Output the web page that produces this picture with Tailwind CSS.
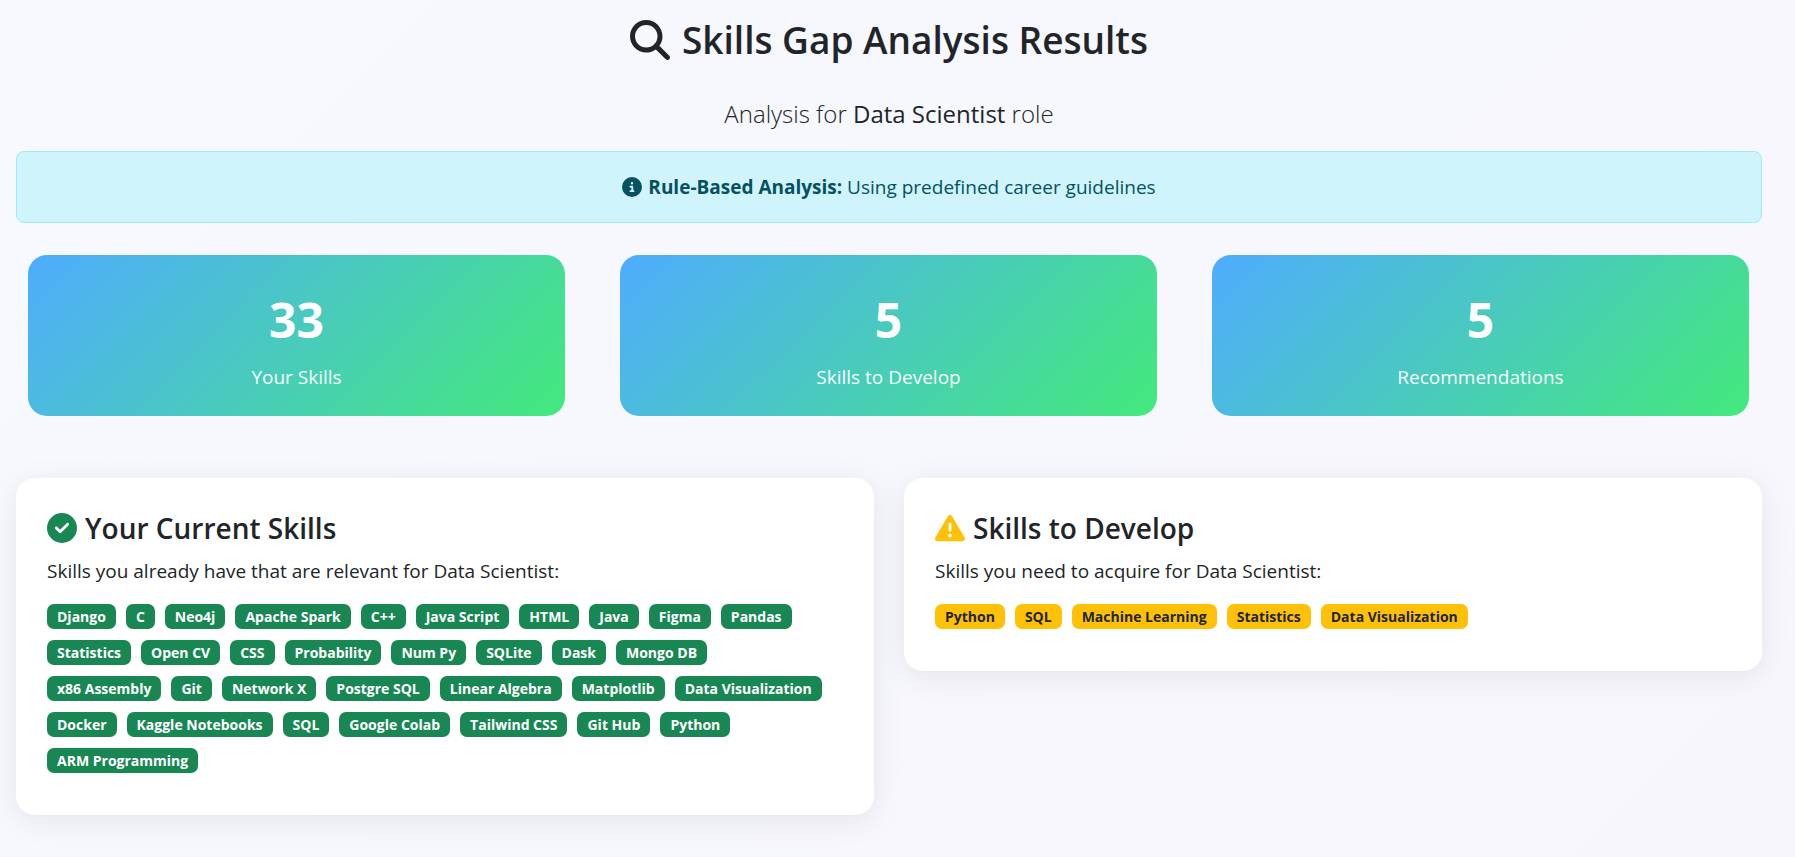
<!DOCTYPE html>
<html lang="en">
<head>
<meta charset="utf-8">
<meta name="viewport" content="width=device-width, initial-scale=1">
<title>Skills Gap Analysis Results</title>
<script src="https://cdn.jsdelivr.net/npm/@tailwindcss/browser@4"></script>
</head>
<body class="min-h-screen bg-linear-135/srgb from-[#f6f9fe] to-[#f7f6fc] font-['Open_Sans','Noto_Sans',sans-serif] text-[19px] leading-[30px] text-[#212529]">
<main class="pl-4 pr-[33px] pt-4 pb-10">
  <header class="text-center">
    <h1 class="flex items-center justify-center gap-3 text-[37px] leading-12 font-semibold">
      <svg class="size-10 shrink-0" viewBox="0 0 512 512" fill="currentColor" aria-hidden="true"><path d="M416 208c0 45.900-14.900 88.300-40 122.700L502.600 457.400c12.500 12.500 12.500 32.800 0 45.300s-32.800 12.500-45.300 0L330.700 376c-34.400 25.200-76.800 40-122.700 40C93.100 416 0 322.900 0 208S93.100 0 208 0S416 93.100 416 208zM208 352a144 144 0 1 0 0-288 144 144 0 1 0 0 288z"/></svg>
      Skills Gap Analysis Results
    </h1>
    <p class="mt-8 text-[24px] leading-9 font-light">Analysis for <strong class="font-normal">Data Scientist</strong> role</p>
  </header>

  <div role="status" class="mt-[19px] flex items-center justify-center gap-[6px] rounded-lg border border-[#9eeaf9] bg-[#cff4fc] px-5 py-5 text-[#055160]">
    <svg class="size-5 shrink-0" viewBox="0 0 512 512" fill="currentColor" aria-hidden="true"><path d="M256 512A256 256 0 1 0 256 0a256 256 0 1 0 0 512zM216 336h24V272H216c-13.300 0-24-10.700-24-24s10.700-24 24-24h48c13.300 0 24 10.700 24 24v88h8c13.300 0 24 10.700 24 24s-10.700 24-24 24H216c-13.300 0-24-10.700-24-24s10.700-24 24-24zm40-208a32 32 0 1 1 0 64 32 32 0 1 1 0-64z"/></svg>
    <p><strong class="font-bold">Rule-Based Analysis:</strong> Using predefined career guidelines</p>
  </div>

  <section class="mt-8 grid grid-cols-3 gap-[55px] pl-3 pr-[13px] text-center text-white">
    <div class="rounded-[19px] bg-linear-135/srgb from-[#4facfe] to-[#43e97b] px-6 pt-[35px] pb-6">
      <div class="text-[48px] leading-[60px] font-bold">33</div>
      <div class="mt-3 leading-[30px] opacity-95">Your Skills</div>
    </div>
    <div class="rounded-[19px] bg-linear-135/srgb from-[#4facfe] to-[#43e97b] px-6 pt-[35px] pb-6">
      <div class="text-[48px] leading-[60px] font-bold">5</div>
      <div class="mt-3 leading-[30px] opacity-95">Skills to Develop</div>
    </div>
    <div class="rounded-[19px] bg-linear-135/srgb from-[#4facfe] to-[#43e97b] px-6 pt-[35px] pb-6">
      <div class="text-[48px] leading-[60px] font-bold">5</div>
      <div class="mt-3 leading-[30px] opacity-95">Recommendations</div>
    </div>
  </section>

  <div class="mt-[62px] grid grid-cols-2 items-start gap-[30px]">
    <section class="rounded-[19px] bg-white px-[31px] pt-8 pb-[42px] shadow-[0_6px_31px_rgba(0,0,0,0.08)]">
      <h2 class="flex items-center gap-2 text-[28px] leading-9 font-semibold">
        <svg class="size-[30px] shrink-0 text-[#198754]" viewBox="0 0 512 512" fill="currentColor" aria-hidden="true"><path d="M256 512A256 256 0 1 0 256 0a256 256 0 1 0 0 512zM369 209L241 337c-9.400 9.400-24.600 9.400-33.900 0l-64-64c-9.400-9.400-9.400-24.600 0-33.900s24.600-9.400 33.900 0l47 47L335 175c9.400-9.400 24.600-9.400 33.900 0s9.400 24.600 0 33.900z"/></svg>
        Your Current Skills
      </h2>
      <p class="mt-[10px]">Skills you already have that are relevant for Data Scientist:</p>
      <ul class="mt-[18px] flex flex-wrap gap-x-[10px] gap-y-[11px] pr-[14px] text-[14px] leading-[25px] font-bold text-white *:rounded-[7px] *:bg-[#198754] *:px-[10px]">
        <li>Django</li><li>C</li><li>Neo4j</li><li>Apache Spark</li><li>C++</li><li>Java Script</li><li>HTML</li><li>Java</li><li>Figma</li><li>Pandas</li>
        <li>Statistics</li><li>Open CV</li><li>CSS</li><li>Probability</li><li>Num Py</li><li>SQLite</li><li>Dask</li><li>Mongo DB</li>
        <li>x86 Assembly</li><li>Git</li><li>Network X</li><li>Postgre SQL</li><li>Linear Algebra</li><li>Matplotlib</li><li>Data Visualization</li>
        <li>Docker</li><li>Kaggle Notebooks</li><li>SQL</li><li>Google Colab</li><li>Tailwind CSS</li><li>Git Hub</li><li>Python</li>
        <li>ARM Programming</li>
      </ul>
    </section>

    <section class="rounded-[19px] bg-white px-[31px] pt-8 pb-[42px] shadow-[0_6px_31px_rgba(0,0,0,0.08)]">
      <h2 class="flex items-center gap-2 text-[28px] leading-9 font-semibold">
        <svg class="size-[30px] shrink-0 text-[#ffc107]" viewBox="0 0 512 512" fill="currentColor" aria-hidden="true"><path d="M256 32c14.200 0 27.300 7.500 34.500 19.800l216 368c7.300 12.400 7.300 27.700 .2 40.100S486.300 480 472 480H40c-14.300 0-27.600-7.700-34.700-20.100s-7-27.800 .2-40.100l216-368C228.700 39.500 241.800 32 256 32zm0 128c-13.300 0-24 10.700-24 24V296c0 13.300 10.700 24 24 24s24-10.700 24-24V184c0-13.300-10.700-24-24-24zm32 224a32 32 0 1 0 -64 0 32 32 0 1 0 64 0z"/></svg>
        Skills to Develop
      </h2>
      <p class="mt-[10px]">Skills you need to acquire for Data Scientist:</p>
      <ul class="mt-[18px] flex flex-wrap gap-x-[10px] gap-y-[11px] pr-[14px] text-[14px] leading-[25px] font-bold *:rounded-[7px] *:bg-[#ffc107] *:px-[10px]">
        <li>Python</li><li>SQL</li><li>Machine Learning</li><li>Statistics</li><li>Data Visualization</li>
      </ul>
    </section>
  </div>
</main>
</body>
</html>
